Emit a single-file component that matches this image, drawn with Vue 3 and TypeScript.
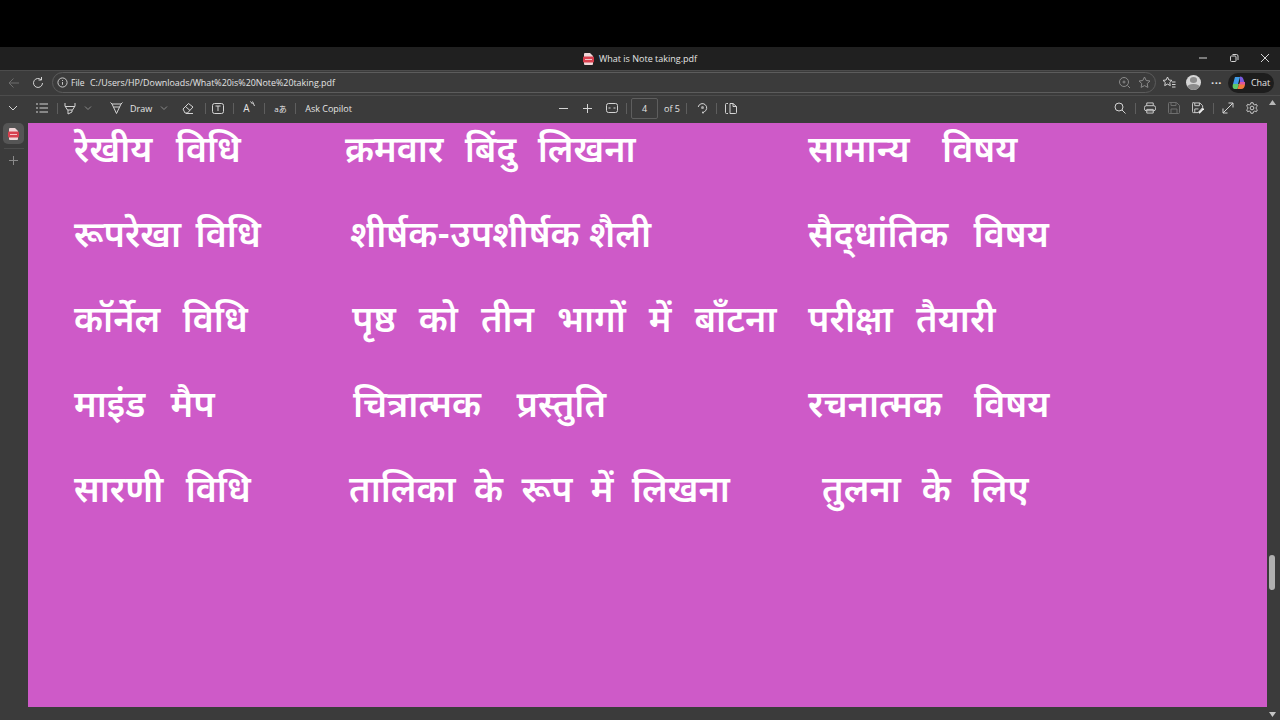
<template>
  <div class="screen">
    <div class="letterbox"></div>

    <div class="titlebar">
      <div class="titlebar__title">
        <svg class="pdf-icon" width="11" height="12" viewBox="0 0 11 12">
          <path d="M2 0h5l3 3v8a1 1 0 0 1-1 1H2a1 1 0 0 1-1-1V1a1 1 0 0 1 1-1z" fill="#f0d6d8" />
          <rect x="0" y="3.500" width="11" height="6" rx="1" fill="#d8404f" />
          <path d="M2 6.500h7" stroke="#f4c4c8" stroke-width="1" />
        </svg>
        <span>What is Note taking.pdf</span>
      </div>
      <div class="titlebar__controls">
        <svg width="10" height="10" viewBox="0 0 10 10"><path d="M1 5h8" class="stroke" /></svg>
        <svg width="10" height="10" viewBox="0 0 10 10">
          <rect x="1.500" y="3" width="5.500" height="5.500" rx="1" class="stroke" />
          <path d="M3.500 1.500h4a1.500 1.500 0 0 1 1.500 1.500v4" class="stroke" />
        </svg>
        <svg width="10" height="10" viewBox="0 0 10 10"><path d="M1 1l8 8M9 1l-8 8" class="stroke" /></svg>
      </div>
    </div>

    <div class="addressbar">
      <svg class="nav-back" width="14" height="14" viewBox="0 0 14 14"><path d="M12 7H2M6.500 2.500L2 7l4.500 4.500" class="stroke faint" /></svg>
      <svg class="nav-reload" width="14" height="14" viewBox="0 0 14 14">
        <path d="M11.500 7a4.500 4.500 0 1 1-1.400-3.300" class="stroke" />
        <path d="M10.500 1v3h-3" class="stroke" />
      </svg>
      <div class="url">
        <svg width="11" height="11" viewBox="0 0 12 12">
          <circle cx="6" cy="6" r="5" class="stroke" />
          <path d="M6 5.500v3M6 3.300v1" class="stroke" />
        </svg>
        <span class="url__scheme">File</span>
        <span class="url__path">C:/Users/HP/Downloads/What%20is%20Note%20taking.pdf</span>
        <span class="spacer"></span>
        <svg width="13" height="13" viewBox="0 0 13 13">
          <circle cx="6" cy="6" r="4.500" class="stroke dim" />
          <path d="M9.500 9.500L12 12M4.500 6h3M6 4.500v3" class="stroke dim" />
        </svg>
        <svg class="url__star" width="13" height="13" viewBox="0 0 13 13">
          <path d="M6.500 1l1.700 3.500 3.800.5-2.800 2.600.7 3.800-3.400-1.800-3.400 1.800.7-3.800L1 5l3.800-.5z" class="stroke dim" />
        </svg>
      </div>
      <svg class="fav" width="14" height="13" viewBox="0 0 14 13">
        <path d="M5.500 1l1.400 3 3.100.4-2.300 2.100.6 3.100-2.800-1.500-2.800 1.500.6-3.100L1 4.400 4.100 4z" class="stroke" />
        <path d="M10 6h3.500M10 8.500h3.500M10 11h3.500" class="stroke" />
      </svg>
      <div class="avatar"><div class="avatar__head"></div><div class="avatar__body"></div></div>
      <span class="more">···</span>
      <div class="chat">
        <svg width="16" height="16" viewBox="0 0 16 16">
          <path d="M4 2h5L7 9H2z" fill="#3f9be8" />
          <path d="M9 1.500c2 0 3 1 3.500 3L14 9H9z" fill="#7a5be0" />
          <path d="M2 9h6l-1.500 5H4c-2 0-3-1.500-2-5z" fill="#5fc96a" />
          <path d="M8 9h6c0 3-1.500 5-4 5H6.500z" fill="#ef7a3c" />
          <path d="M9 7h5v2.500H8z" fill="#e0559a" />
        </svg>
        <span>Chat</span>
      </div>
    </div>

    <div class="toolbar">
      <div class="toolbar__left">
        <svg class="t-chev" width="10" height="10" viewBox="0 0 10 10"><path d="M1 3l4 4 4-4" class="stroke" /></svg>
        <svg class="t-list" width="12" height="10" viewBox="0 0 12 10"><path d="M0 1h2M3.500 1H12M0 5h2M3.500 5H12M0 9h2M3.500 9H12" class="stroke" /></svg>
        <i class="sep sep--list"></i>
        <svg class="t-high" width="12" height="13" viewBox="0 0 12 13"><path d="M1 1v3l2.500 4h5L11 4V1M1 4.500h10M4 8v4l4-2V8" class="stroke" /></svg>
        <svg class="t-caret" width="8" height="8" viewBox="0 0 8 8"><path d="M1 2.500l3 3 3-3" class="stroke dim" /></svg>
        <svg class="t-draw" width="13" height="12" viewBox="0 0 13 12"><path d="M.5 .5L2 2h9L12.500 .5M2 2l4.500 9.500L11 2M3.500 5h6" class="stroke" /></svg>
        <span class="t-label">Draw</span>
        <svg class="t-caret t-caret--draw" width="8" height="8" viewBox="0 0 8 8"><path d="M1 2.500l3 3 3-3" class="stroke dim" /></svg>
        <svg class="t-erase" width="12" height="12" viewBox="0 0 12 12"><path d="M1 7l5.500-5.500 4.500 3.500-5.500 6H3zM3.500 4.500L8 8.500M4 11.500h7" class="stroke" /></svg>
        <i class="sep sep--erase"></i>
        <svg class="t-text" width="12" height="11" viewBox="0 0 12 11">
          <rect x=".5" y=".5" width="11" height="10" rx="2" class="stroke" />
          <path d="M3.500 3h5M6 3v5" class="stroke" />
        </svg>
        <i class="sep"></i>
        <span class="t-read">
          A
          <svg width="5" height="6" viewBox="0 0 5 6"><path d="M.5 .5l2 2.500M2.500 .5L4.500 5" class="stroke" /></svg>
        </span>
        <i class="sep"></i>
        <span class="t-trans">aあ</span>
        <i class="sep"></i>
        <span class="t-label t-copilot">Ask Copilot</span>
      </div>

      <div class="toolbar__center">
        <svg width="9" height="9" viewBox="0 0 9 9"><path d="M0 4.500h9" class="stroke" /></svg>
        <svg class="t-plus" width="9" height="9" viewBox="0 0 9 9"><path d="M0 4.500h9M4.500 0v9" class="stroke" /></svg>
        <svg class="t-fit" width="12" height="10" viewBox="0 0 12 10">
          <rect x=".5" y=".5" width="11" height="9" rx="2" class="stroke" />
          <path d="M2.500 5h2M7.500 5h2" class="stroke" />
        </svg>
        <i class="sep sep--page"></i>
        <div class="page-box">4</div>
        <span class="page-of">of 5</span>
        <i class="sep sep--of"></i>
        <svg class="t-rot" width="11" height="12" viewBox="0 0 11 12">
          <path d="M1.200 5a4.300 4.300 0 1 1 6 4.800" class="stroke" />
          <circle cx="5.500" cy="5.500" r="1.500" fill="#a8a8a8" />
          <circle cx="6" cy="10.500" r="1" fill="#d4d4d4" />
        </svg>
        <i class="sep sep--rot"></i>
        <svg class="t-view" width="12" height="11" viewBox="0 0 12 11">
          <path d="M3 .5H1.500a1 1 0 0 0-1 1v8a1 1 0 0 0 1 1H3M5 .5h3l3.500 3v6a1 1 0 0 1-1 1H5zM8 .5v3h3.500" class="stroke" />
        </svg>
      </div>

      <div class="toolbar__right">
        <svg width="12" height="12" viewBox="0 0 12 12"><circle cx="5" cy="5" r="4" class="stroke" /><path d="M8 8l3.500 3.500" class="stroke" /></svg>
        <i class="sep"></i>
        <svg width="12" height="12" viewBox="0 0 13 12">
          <rect x=".5" y="3.500" width="12" height="5.500" rx="2" class="stroke" />
          <path d="M3 3.500V.5h7v3M3 7.500h7v4H3z" class="stroke" />
        </svg>
        <svg width="12" height="12" viewBox="0 0 12 12"><path d="M1.500.5h7l3 3v7a1 1 0 0 1-1 1h-9a1 1 0 0 1-1-1v-9a1 1 0 0 1 1-1zM3 .5v3h5v-3M3 11.500V7h6v4.500" class="stroke faint" /></svg>
        <svg width="12" height="12" viewBox="0 0 13 12"><path d="M1.500.5h7l3 3v2l-5 5.500h-5a1 1 0 0 1-1-1v-9a1 1 0 0 1 1-1zM3 .5v3h5v-3M3 11V7h4" class="stroke" /><path d="M7.500 11.500l5-5" class="stroke thick" /></svg>
        <i class="sep"></i>
        <svg width="12" height="12" viewBox="0 0 12 12"><path d="M1 11L11 1M6.500 1H11v4.500M1 6.500V11h4.500" class="stroke" /></svg>
        <svg width="12" height="12" viewBox="0 0 13 13">
          <circle cx="6.500" cy="6.500" r="2" class="stroke" />
          <path d="M5.300.8h2.400l.4 1.700 1.500.7 1.600-.7 1.100 2-1.300 1.200v1.600l1.300 1.200-1.100 2-1.600-.7-1.500.7-.4 1.700H5.300l-.4-1.700-1.500-.7-1.600.7-1.100-2 1.300-1.200V5.700L.7 4.500l1.100-2 1.600.7 1.500-.7z" class="stroke" />
        </svg>
      </div>
    </div>

    <div class="body">
      <aside class="sidebar">
        <div class="tab">
          <svg width="11" height="12" viewBox="0 0 11 12">
            <path d="M2 0h5l3 3v8a1 1 0 0 1-1 1H2a1 1 0 0 1-1-1V1a1 1 0 0 1 1-1z" fill="#f0d6d8" />
            <rect x="0" y="3.500" width="11" height="6" rx="1" fill="#d8404f" />
            <path d="M2 6.500h7" stroke="#f4c4c8" stroke-width="1" />
          </svg>
        </div>
        <div class="tab-rule"></div>
        <svg class="add" width="9" height="9" viewBox="0 0 9 9"><path d="M0 4.500h9M4.500 0v9" class="stroke dim" /></svg>
      </aside>

      <main class="viewer">
        <div class="page">
          <div v-for="(row, i) in rows" :key="i" class="row">
            <span
              v-for="(cell, j) in row"
              :key="j"
              class="cell"
              :style="{ paddingLeft: (cell.offset ?? 0) + 'px', wordSpacing: cell.ws + 'px' }"
            >{{ cell.text }}</span>
          </div>
        </div>
        <div class="scrollbar">
          <svg class="scrollbar__up" width="7" height="5" viewBox="0 0 7 5"><path d="M3.500 0L7 5H0z" fill="#b8b8b8" /></svg>
          <div class="scrollbar__thumb"></div>
          <svg width="7" height="5" viewBox="0 0 7 5"><path d="M0 0h7L3.500 5z" fill="#c4c4c4" /></svg>
        </div>
      </main>
    </div>
  </div>
</template>

<script setup lang="ts">
interface Cell {
  text: string
  ws: number
  offset?: number
}

// word spacing is per cell, the PDF's font has different glyph widths
const rows: Cell[][] = [
  [
    { text: 'रेखीय विधि', ws: 14 },
    { text: 'क्रमवार बिंदु लिखना', ws: 12 },
    { text: 'सामान्य विषय', ws: 23 },
  ],
  [
    { text: 'रूपरेखा विधि', ws: 5 },
    { text: 'शीर्षक-उपशीर्षक शैली', ws: 0, offset: 5 },
    { text: 'सैद्\u200cधांतिक विषय', ws: 16 },
  ],
  [
    { text: 'कॉर्नेल विधि', ws: 13 },
    { text: 'पृष्ठ को तीन भागों में बाँटना', ws: 13.6, offset: 7 },
    { text: 'परीक्षा तैयारी', ws: 14 },
  ],
  [
    { text: 'माइंड मैप', ws: 16 },
    { text: 'चित्रात्मक प्रस्तुति', ws: 26, offset: 8 },
    { text: 'रचनात्मक विषय', ws: 23 },
  ],
  [
    { text: 'सारणी विधि', ws: 13 },
    { text: 'तालिका के रूप में लिखना', ws: 9, offset: 4 },
    { text: 'तुलना के लिए', ws: 11.5, offset: 14 },
  ],
]
</script>

<style>
html,
body {
  background: #000;
  overflow: hidden;
}
</style>

<style scoped>
.screen {
  width: 1280px;
  height: 720px;
  display: flex;
  flex-direction: column;
  font-family: 'Open Sans', 'Noto Sans', 'Noto Sans CJK JP', 'Liberation Sans', sans-serif;
  color: #e4e4e4;
  background: #000;
  overflow: hidden;
}

.stroke {
  fill: none;
  stroke: #d4d4d4;
  stroke-width: 1;
}

.dim {
  stroke: #8a8a8a;
}

.faint {
  stroke: #6e6e6e;
}

.thick {
  stroke-width: 2;
  stroke: #eee;
}

.spacer {
  flex: 1;
}

.letterbox {
  height: 47px;
  flex: none;
}

.titlebar {
  height: 23px;
  flex: none;
  background: #202020;
  display: flex;
  align-items: center;
  justify-content: center;
  position: relative;
  font-size: 9px;
}

.titlebar__title {
  display: flex;
  align-items: center;
  gap: 5px;
}

.titlebar__controls {
  position: absolute;
  right: 10px;
  top: 6px;
  display: flex;
  gap: 21px;
}

.addressbar {
  height: 25px;
  flex: none;
  background: #3b3b3b;
  border-top: 1px solid #4c4c4c;
  box-sizing: border-box;
  display: flex;
  align-items: center;
  padding: 0 0 1px 7px;
}

.nav-reload {
  margin-left: 10px;
}

.url {
  margin-left: 7px;
  width: 1104px;
  box-sizing: border-box;
  height: 21px;
  flex: none;
  border: 1px solid #5c5c5c;
  border-radius: 11px;
  display: flex;
  align-items: center;
  padding: 0 4px 0 4px;
  font-size: 9px;
}

.url__scheme {
  margin-left: 3px;
  width: 13px;
  font-size: 8.500px;
  font-weight: 500;
  flex: none;
}

.url__path {
  margin-left: 6px;
  font-size: 8.900px;
}

.url__star {
  margin-left: 7px;
}

.fav {
  margin-left: 6px;
}

.avatar {
  width: 15px;
  height: 15px;
  margin-left: 10px;
  border-radius: 50%;
  background: #d6d6d6;
  overflow: hidden;
  display: flex;
  flex-direction: column;
  align-items: center;
  flex: none;
}

.avatar__head {
  width: 7px;
  height: 7px;
  margin-top: 2px;
  border-radius: 50%;
  background: #8c8c8c;
}

.avatar__body {
  width: 13px;
  height: 8px;
  margin-top: 1px;
  border-radius: 50%;
  background: #8c8c8c;
}

.more {
  margin-left: 10px;
  font-size: 11px;
  font-weight: 700;
  letter-spacing: 0.5px;
}

.chat {
  margin-left: 6px;
  width: 46px;
  height: 20px;
  flex: none;
  border-radius: 10px;
  background: #1d1d1d;
  display: flex;
  align-items: center;
  gap: 4px;
  padding-left: 3px;
  box-sizing: border-box;
  font-size: 9px;
}

.toolbar {
  height: 27px;
  flex: none;
  background: #3b3b3b;
  border-top: 1px solid #4c4c4c;
  padding-bottom: 2px;
  box-sizing: border-box;
  display: grid;
  grid-template-columns: 555px 1fr auto;
  align-items: center;
  font-size: 9px;
}

.toolbar__left,
.toolbar__center,
.toolbar__right {
  display: flex;
  align-items: center;
}

.sep {
  width: 1px;
  height: 11px;
  background: #5e5e5e;
  flex: none;
  margin: 0 9px;
}

.t-chev {
  margin-left: 8px;
}

.t-list {
  margin-left: 18px;
}

.sep--list {
  margin: 0 6px 0 9px;
}

.t-caret {
  margin-left: 8px;
}

.t-draw {
  margin-left: 18px;
}

.t-label {
  margin-left: 7px;
}

.t-caret--draw {
  margin-left: 8px;
}

.t-erase {
  margin-left: 14px;
}

.sep--erase {
  margin: 0 6px 0 11px;
}

.t-read {
  width: 12px;
  display: flex;
  align-items: flex-start;
  font-size: 10px;
}

.t-trans {
  width: 12px;
  font-size: 8px;
  white-space: nowrap;
}

.t-copilot {
  margin-left: 0;
}

.toolbar__center {
  padding-left: 4px;
}

.t-plus {
  margin-left: 15px;
}

.t-fit {
  margin-left: 14px;
}

.sep--page {
  margin: 0 4px 0 8px;
}

.page-box {
  width: 27px;
  height: 21px;
  box-sizing: border-box;
  border: 1px solid #5e5e5e;
  border-radius: 2px;
  display: flex;
  align-items: center;
  justify-content: center;
}

.page-of {
  margin-left: 6px;
}

.sep--of {
  margin: 0 10px 0 6px;
}

.sep--rot {
  margin: 0 8px;
}

.toolbar__right {
  padding-right: 16px;
}

.toolbar__right svg {
  margin: 0 6px;
}

.toolbar__right .sep {
  margin: 0 2.500px;
}

.body {
  flex: 1;
  min-height: 0;
  display: flex;
  background: #3b3b3b;
}

.sidebar {
  width: 28px;
  flex: none;
  display: flex;
  flex-direction: column;
  align-items: center;
  background: #3b3b3b;
}

.tab {
  width: 21px;
  height: 21px;
  border-radius: 5px;
  background: #555;
  display: flex;
  align-items: center;
  justify-content: center;
  margin: 1px 2px 0 0;
}

.tab-rule {
  width: 20px;
  height: 1px;
  background: #4c4c4c;
  margin-top: 4px;
}

.add {
  margin: 7px 2px 0 0;
}

.viewer {
  flex: 1;
  min-width: 0;
  display: flex;
}

.page {
  width: 1239px;
  height: 584px;
  margin-top: 1px;
  background: #ce5ac8;
  box-sizing: border-box;
  padding-left: 46px;
  flex: none;
  overflow: hidden;
}

.row {
  display: grid;
  grid-template-columns: 271px 463px auto;
  height: 85px;
  align-items: center;
  margin-top: -12px;
  margin-bottom: 12px;
}

.cell {
  font-family: 'Noto Sans Devanagari', 'Noto Sans', 'Lohit Devanagari', 'FreeSans', 'Liberation Sans', sans-serif;
  font-size: 36px;
  font-weight: 600;
  color: #fff;
  white-space: nowrap;
}

.scrollbar {
  width: 13px;
  flex: none;
  display: flex;
  flex-direction: column;
  align-items: center;
  justify-content: flex-end;
  padding: 0 3px 3px 0;
  box-sizing: border-box;
  position: relative;
}

.scrollbar__up {
  position: absolute;
  top: -22px;
}

.scrollbar__thumb {
  width: 6px;
  height: 35px;
  border-radius: 3px;
  background: #b0b0b0;
  margin-bottom: 122px;
}
</style>
